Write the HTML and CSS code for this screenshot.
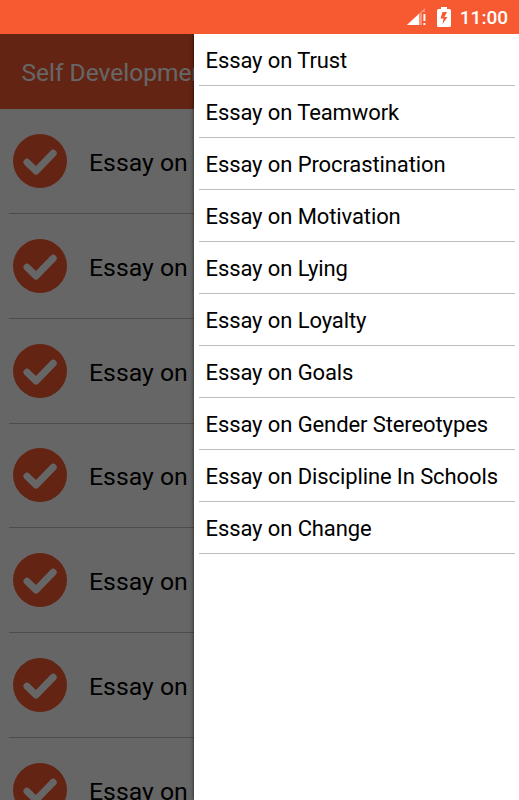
FILE: index.html
```
<!DOCTYPE html>
<html lang="en">
  <head>
    <meta charset="utf-8">
    <meta name="viewport" content="width=device-width, initial-scale=1">
    <title>Self Development Essays</title>
    <link rel="stylesheet" href="styles.css">
  </head>
  <body>
    <svg class="defs" width="0" height="0">
      <symbol id="check" viewBox="0 0 54 54">
        <circle cx="27" cy="27" r="27" fill="#f75a31"/>
        <path d="M14 28.2l9 8.8L40.2 19.2" fill="none" stroke="#fff" stroke-width="7" stroke-linecap="round" stroke-linejoin="round"/>
      </symbol>
    </svg>
    <header class="status-bar">
      <svg class="signal" width="20" height="18" viewBox="0 0 20 18">
        <path d="M0 17L18 0v4h-3v13z" fill="#fff" opacity=".35"/>
        <path d="M0 17L12 5.7V17z" fill="#fff"/>
        <path d="M16.4 6h2v7h-2zM16.4 15h2v2h-2z" fill="#fff"/>
      </svg>
      <svg class="battery" width="14" height="20" viewBox="0 0 14 20">
        <path d="M4 0h6v2h2.5Q14 2 14 3.5v15q0 1.5-1.5 1.5h-11Q0 20 0 18.5v-15Q0 2 1.5 2H4z" fill="#fff"/>
        <path d="M5.500 5L3.500 11.500h3L5.500 17 10.500 10H7.400L10 5z" fill="#f75a31"/>
      </svg>
      <span class="clock">11:00</span>
    </header>
    <div class="screen">
      <main class="page">
        <h1 class="title">Self Development</h1>
        <ul class="essays">
          <li><svg class="icon"><use href="#check"/></svg><span>Essay on Trust</span></li>
          <li><svg class="icon"><use href="#check"/></svg><span>Essay on Teamwork</span></li>
          <li><svg class="icon"><use href="#check"/></svg><span>Essay on Procrastination</span></li>
          <li><svg class="icon"><use href="#check"/></svg><span>Essay on Motivation</span></li>
          <li><svg class="icon"><use href="#check"/></svg><span>Essay on Lying</span></li>
          <li><svg class="icon"><use href="#check"/></svg><span>Essay on Loyalty</span></li>
          <li><svg class="icon"><use href="#check"/></svg><span>Essay on Goals</span></li>
        </ul>
      </main>
      <div class="scrim"></div>
      <nav class="menu">
        <ul>
          <li>Essay on Trust</li>
          <li>Essay on Teamwork</li>
          <li>Essay on Procrastination</li>
          <li>Essay on Motivation</li>
          <li>Essay on Lying</li>
          <li>Essay on Loyalty</li>
          <li>Essay on Goals</li>
          <li>Essay on Gender Stereotypes</li>
          <li>Essay on Discipline In Schools</li>
          <li>Essay on Change</li>
        </ul>
      </nav>
    </div>
  </body>
</html>
```

FILE: styles.css
```
:root {
  --orange: #f75a31;
  --line: #bdbdbd;
}
* {
  box-sizing: border-box;
}
body {
  display: flex;
  flex-direction: column;
  height: 100vh;
  margin: 0;
  overflow: hidden;
  font-family: Roboto, "Liberation Sans", sans-serif;
  color: #000;
  background-color: #fff;
}
ul {
  margin: 0;
  padding: 0;
  list-style: none;
}
.defs {
  position: absolute;
}
.status-bar {
  display: flex;
  flex: none;
  align-items: center;
  justify-content: flex-end;
  height: 34px;
  padding-right: 11px;
  color: #fff;
  background-color: var(--orange);
}
.battery {
  margin-left: 10px;
}
.clock {
  margin-left: 9px;
  font-size: 19px;
  font-weight: 500;
}
.screen {
  position: relative;
  flex: 1;
  overflow: hidden;
}
.title {
  height: 75px;
  margin: 0;
  padding: 1px 0 0 21.5px;
  font-size: 24.5px;
  font-weight: 400;
  line-height: 75px;
  color: #fff;
  background-color: var(--orange);
}
.essays {
  padding: 0 9px;
}
.essays li {
  display: flex;
  align-items: center;
  height: 104.85px;
  padding-left: 4px;
  font-size: 24.8px;
  white-space: nowrap;
  border-bottom: 1px solid var(--line);
}
.essays span {
  padding-top: 3px;
}
.icon {
  flex: none;
  width: 54px;
  height: 54px;
  margin-right: 22px;
}
.scrim {
  position: absolute;
  inset: 0;
  background-color: rgba(0, 0, 0, .6);
}
.menu {
  position: absolute;
  top: 0;
  right: 0;
  bottom: 0;
  width: 325px;
  padding: 0 4px 0 5px;
  background-color: #fff;
  box-shadow: 0 0 4px rgba(0, 0, 0, .7);
}
.menu li {
  height: 52.05px;
  padding: 1px 0 0 6.5px;
  font-size: 22px;
  line-height: 52px;
  letter-spacing: -.1px;
  white-space: nowrap;
  border-bottom: 1px solid var(--line);
}
```
